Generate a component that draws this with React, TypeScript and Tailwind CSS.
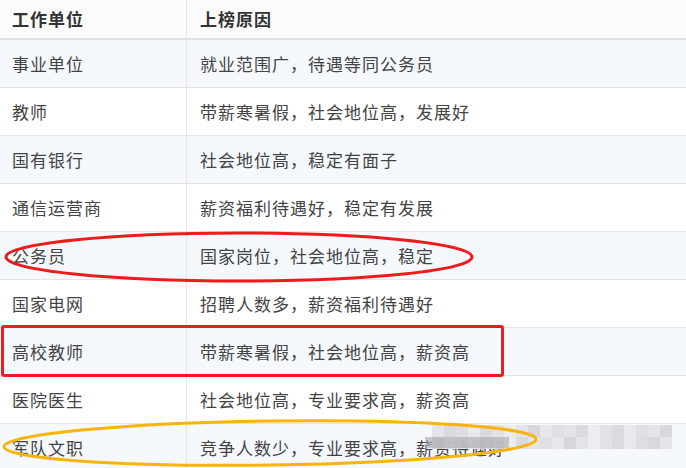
import React from "react";

const rows: [string, string][] = [
  ["事业单位", "就业范围广，待遇等同公务员"],
  ["教师", "带薪寒暑假，社会地位高，发展好"],
  ["国有银行", "社会地位高，稳定有面子"],
  ["通信运营商", "薪资福利待遇好，稳定有发展"],
  ["公务员", "国家岗位，社会地位高，稳定"],
  ["国家电网", "招聘人数多，薪资福利待遇好"],
  ["高校教师", "带薪寒暑假，社会地位高，薪资高"],
  ["医院医生", "社会地位高，专业要求高，薪资高"],
  ["军队文职", "竞争人数少，专业要求高，薪资待遇好"],
];

const mosaic = [
  "#e4e4e8", "#d6d6da", "#dcdce0", "#e8e8ec", "#d8d8dc", "#e0e0e4", "#ececf0", "#e2e2e6", "#d4d4d8", "#e6e6ea", "#dedee2", "#e2e2e6", "#d8d8dc", "#ececf0", "#e0e0e4", "#dadade", "#e8e8ec", "#dedee2", "#e4e4e8", "#d6d6da",
];

export default function App() {
  return (
    <div
      className="relative w-[686px] h-[468px] overflow-hidden bg-white text-[17px] tracking-[1px] text-[#444]"
      style={{ fontFamily: '"Noto Sans CJK SC", "Noto Sans", sans-serif' }}
    >
      <div className="grid grid-cols-[187px_1fr]">
        <div className="h-[40px] flex items-center pl-[12px] font-bold text-[#333] bg-[#fbfbfc] border-r border-[#e4e6ea] border-b-2 border-b-[#dfe1e5]">
          工作单位
        </div>
        <div className="h-[40px] flex items-center pl-[13px] font-bold text-[#333] bg-[#fbfbfc] border-b-2 border-b-[#dfe1e5]">
          上榜原因
        </div>
        {rows.map(([a, b], i) => {
          const bg = i % 2 === 0 ? "bg-[#f5f8fc]" : "bg-white";
          return (
            <React.Fragment key={i}>
              <div className={`h-[48px] flex items-center pl-[12px] border-r border-[#e4e6ea] border-b border-b-[#e2e4e8] ${bg}`}>
                {a}
              </div>
              <div className={`h-[48px] flex items-center pl-[13px] border-b border-b-[#e2e4e8] ${bg}`}>
                {b}
              </div>
            </React.Fragment>
          );
        })}
      </div>

      {/* mosaic */}
      <div className="absolute left-[432px] top-[425px] w-[244px] grid grid-cols-[repeat(20,12px)] grid-rows-[12px_12px] opacity-90">
        {mosaic.concat(mosaic.slice().reverse()).map((c, i) => (
          <div key={i} style={{ backgroundColor: c }} />
        ))}
      </div>
      <div className="absolute left-[425px] top-[437px] w-[84px] h-[11px] bg-[#a8a8ac] opacity-60" />

      {/* red rectangle */}
      <div className="absolute left-[1px] top-[325px] w-[503px] h-[52px] border-[3px] border-[#f01c1c] rounded-[3px]" />

      <svg className="absolute left-0 top-0" width="686" height="468">
        <ellipse cx="239" cy="257" rx="233" ry="24" fill="none" stroke="#ee1b1b" strokeWidth="3" />
        <ellipse cx="270" cy="443" rx="266" ry="22" fill="none" stroke="#f8b40a" strokeWidth="3" transform="rotate(-0.8 270 443)" />
      </svg>
    </div>
  );
}
